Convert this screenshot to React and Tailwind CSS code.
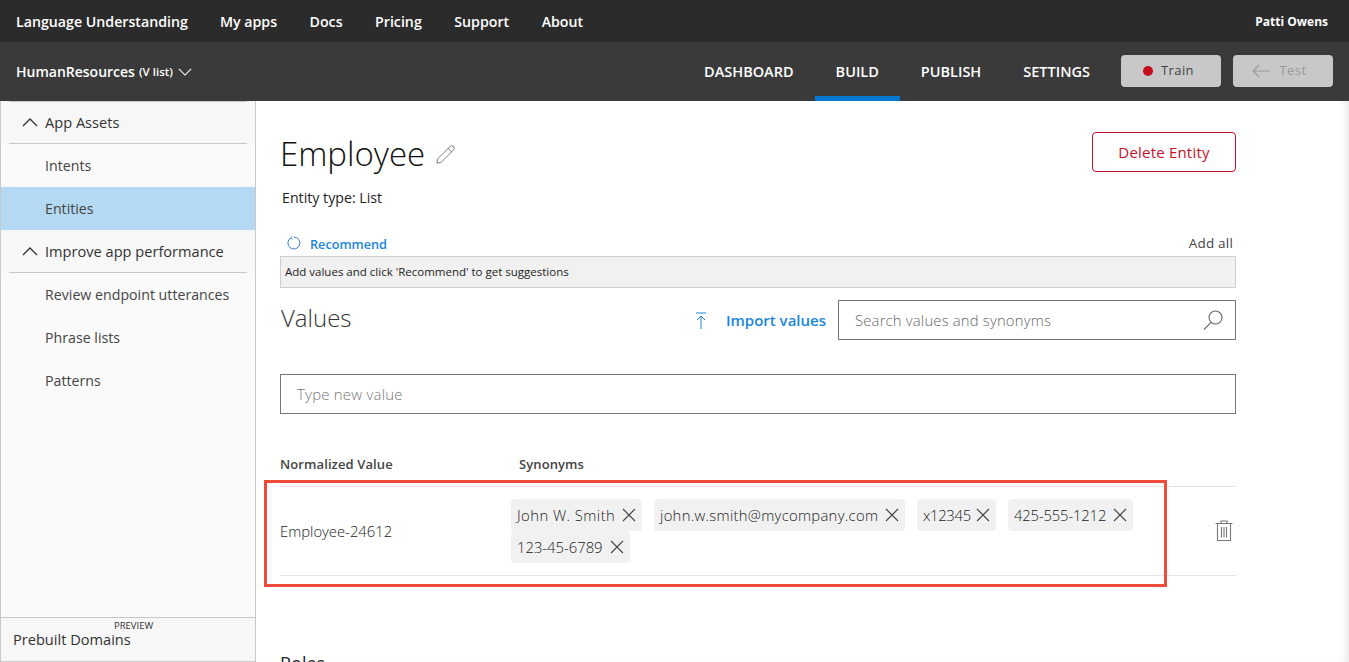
import { Pencil } from "lucide-react";

const topLinks = ["My apps", "Docs", "Pricing", "Support", "About"];
const tabs = ["DASHBOARD", "BUILD", "PUBLISH", "SETTINGS"];

function Chevron({ up, className }) {
  return (
    <svg viewBox="0 0 16 9" className={className} fill="none" stroke="currentColor" strokeWidth="1.3">
      <path d={up ? "M1 8l7-7 7 7" : "M1 1l7 7 7-7"} />
    </svg>
  );
}

function SideHeader({ label, h }) {
  return (
    <div className={`mx-2 ${h} flex items-center border-b border-[#c8c8c8] text-[14.6px] text-[#333]`}>
      <Chevron up className="w-4 h-[9px] ml-[13px] mr-[7px] text-[#333]" />
      {label}
    </div>
  );
}

function SideItem({ label, active }) {
  return (
    <div className={`h-[43px] flex items-center pl-[44px] text-[14.2px] text-[#444] ${active ? "bg-[#b3daf2]" : "bg-[#fafafa]"}`}>
      {label}
    </div>
  );
}

function Chip({ label, size }) {
  return (
    <span className={`${size} h-8 flex items-center justify-between pl-[6px] pr-[6px] bg-[#f1f1f1] rounded-sm text-[14.8px] font-light text-[#222]`}>
      {label}
      <svg viewBox="0 0 14 14" className="w-[14px] h-[14px] text-[#444]" fill="none" stroke="currentColor" strokeWidth="1.1">
        <path d="M1 1l12 12M13 1L1 13" />
      </svg>
    </span>
  );
}

export default function App() {
  return (
    <div className="relative h-[662px] overflow-hidden bg-white font-['Open_Sans','Liberation_Sans',sans-serif]">
      <header className="h-[42px] bg-[#2b2b2b] flex items-center pt-px pl-4 pr-[21px] text-white">
        <span className="text-[14.2px] font-semibold mr-8">Language Understanding</span>
        <nav className="flex gap-[32.5px] text-[14.2px] font-semibold">
          {topLinks.map((l) => (
            <span key={l}>{l}</span>
          ))}
        </nav>
        <span className="ml-auto text-[12px] font-bold">Patti Owens</span>
      </header>

      <div className="h-[59px] bg-[#3a3a3a] flex items-center pl-4 pr-4 text-white">
        <span className="text-[14px] font-semibold">HumanResources</span>
        <span className="text-[11.5px] font-semibold ml-1">(V list)</span>
        <Chevron className="w-[14px] h-2 ml-[5px] mt-px text-white" />
        <nav className="ml-auto flex h-full">
          {tabs.map((t) => (
            <span
              key={t}
              className={`h-full flex items-center px-[21px] text-[14.5px] font-semibold ${t === "BUILD" ? "border-b-[5px] border-[#0078d4] pt-[5px]" : ""}`}
            >
              {t}
            </span>
          ))}
        </nav>
        <button className="ml-[10px] -mt-px w-[100px] h-8 pr-[5px] rounded-sm bg-[#c8c8c8] flex items-center justify-center gap-[8px] text-[13px] tracking-[0.4px] font-medium text-[#444]">
          <span className="w-[10px] h-[10px] rounded-full bg-[#c50f1f]" />
          Train
        </button>
        <button className="ml-[12px] -mt-px w-[100px] h-8 pr-2 rounded-sm bg-[#c8c8c8] flex items-center justify-center gap-[10px] text-[13px] tracking-[0.4px] font-medium text-[#999]">
          <svg viewBox="0 0 18 14" className="w-[18px] h-[14px]" fill="none" stroke="currentColor" strokeWidth="1.1">
            <path d="M18 7H1M7 1L1 7l6 6" />
          </svg>
          Test
        </button>
      </div>

      <div className="flex h-[561px]">
        <aside className="w-[256px] shrink-0 flex flex-col bg-[#fafafa] border-l border-r border-[#c8c8c8]">
          <div className="bg-[#f7f7f7]">
            <div className="mx-2 border-t border-[#c8c8c8]" />
            <SideHeader label="App Assets" h="h-[42px]" />
          </div>
          <SideItem label="Intents" />
          <SideItem label="Entities" active />
          <div className="bg-[#f7f7f7]">
            <SideHeader label="Improve app performance" h="h-[43px] pt-px" />
          </div>
          <SideItem label="Review endpoint utterances" />
          <SideItem label="Phrase lists" />
          <SideItem label="Patterns" />
          <div className="relative mt-auto h-[45px] bg-[#f7f7f7] border-t border-b border-[#c8c8c8] pl-3 pt-[13px] text-[14.6px] leading-4 text-[#333]">
            Prebuilt Domains
            <span className="absolute left-[113px] top-[2px] text-[9.5px] leading-3 text-[#333]">PREVIEW</span>
          </div>
        </aside>

        <main className="flex-1 pl-[24px] pr-[113px] shadow-[inset_-8px_0_8px_-6px_rgba(0,0,0,0.12)]">
          <div className="flex justify-between pt-[31px]">
            <div className="flex items-center gap-[10px] h-[44px]">
              <h1 className="text-[33px] font-light text-[#111]">Employee</h1>
              <Pencil className="w-[21px] h-[21px] text-[#777]" strokeWidth={1.1} />
            </div>
            <button className="w-36 h-10 border border-[#c50f2b] rounded-sm text-[15px] tracking-[0.2px] text-[#c50f2b]">Delete Entity</button>
          </div>
          <p className="mt-3 h-5 pl-[2px] text-[14.2px] leading-5 text-[#222]">Entity type: List</p>

          <div className="mt-[26px] h-[22px] flex items-center justify-between pl-[7px] pr-[3px]">
            <span className="flex items-center gap-[9px] text-[12.7px] font-semibold text-[#1a86dc]">
              <svg viewBox="0 0 14 14" className="w-[14px] h-[14px] -mt-[3px] text-[#3b78d0]" fill="none" stroke="currentColor" strokeWidth="1">
                <path d="M3.6 2A6 6 0 1 0 7 1M3.6 2l1.6-1.6M3.6 2l1.8 1.4" />
              </svg>
              Recommend
            </span>
            <span className="-mt-[3px] text-[13.5px] tracking-[0.2px] font-medium text-[#444]">Add all</span>
          </div>
          <div className="h-8 flex items-center pl-1 bg-[#f1f1f1] border border-[#d0d0d0] text-[11.5px] text-[#222]">
            Add values and click 'Recommend' to get suggestions
          </div>

          <div className="mt-3 h-10 flex items-center">
            <h2 className="text-[24px] leading-8 pl-px font-light text-[#333] mb-[4px]">Values</h2>
            <svg viewBox="0 0 12 17" className="ml-auto w-3 h-[17px] text-[#1a86dc]" fill="none" stroke="currentColor" strokeWidth="1">
              <path d="M1 1h10M6 17V4M2 8l4-4 4 4" />
            </svg>
            <span className="ml-[19px] text-[15px] font-semibold text-[#1a86dc]">Import values</span>
            <div className="ml-3 w-[398px] h-10 flex items-center justify-between pl-4 pr-[12px] border border-[#767676] text-[14.8px] tracking-[0.2px] font-light text-[#666]">
              Search values and synonyms
              <svg viewBox="0 0 20 20" className="w-5 h-5 text-[#666]" fill="none" stroke="currentColor" strokeWidth="1.1">
                <circle cx="12.5" cy="7.5" r="6.5" />
                <path d="M8 12.3 1 19.5" />
              </svg>
            </div>
          </div>

          <div className="mt-[34px] h-10 flex items-center pl-4 border border-[#767676] text-[15px] tracking-[0.2px] font-light text-[#777]">Type new value</div>

          <div className="mt-[40px] h-[22px] flex items-center text-[13px] tracking-[0.1px] font-semibold text-[#444]">
            <span className="w-[239px]">Normalized Value</span>
            <span>Synonyms</span>
          </div>

          <div className="mt-[10px] h-[90px] flex items-center border-t border-b border-[#e4e4e4]">
            <span className="w-[231px] shrink-0 text-[14.8px] font-light text-[#222]">Employee-24612</span>
            <div className="w-[650px] flex flex-wrap gap-x-3">
              <Chip label="John W. Smith" size="w-[131px] tracking-[0.45px]" />
              <Chip label="john.w.smith@mycompany.com" size="w-[251px] tracking-[0.3px]" />
              <Chip label="x12345" size="w-[79px] tracking-[-0.3px]" />
              <Chip label="425-555-1212" size="w-[125px] tracking-[-0.15px]" />
              <Chip label="123-45-6789" size="w-[119px]" />
            </div>
            <svg viewBox="0 0 18 21" className="ml-auto mr-[3px] -mt-[2px] w-[18px] h-[21px] text-[#777]" fill="none" stroke="currentColor" strokeWidth="1.1">
              <path d="M0.5 3.5h17M6 3.5V1h6v2.5M2.5 3.5v17h13v-17M6.5 7v10.5M9 7v10.5M11.5 7v10.5" />
            </svg>
          </div>

          <h2 className="mt-[74px] text-[18px] font-medium text-[#222]">Roles</h2>
        </main>
      </div>

      <div className="absolute left-[264px] top-[480px] w-[903px] h-[107px] border-[3px] border-[#ee4b3a] pointer-events-none" />
    </div>
  );
}
